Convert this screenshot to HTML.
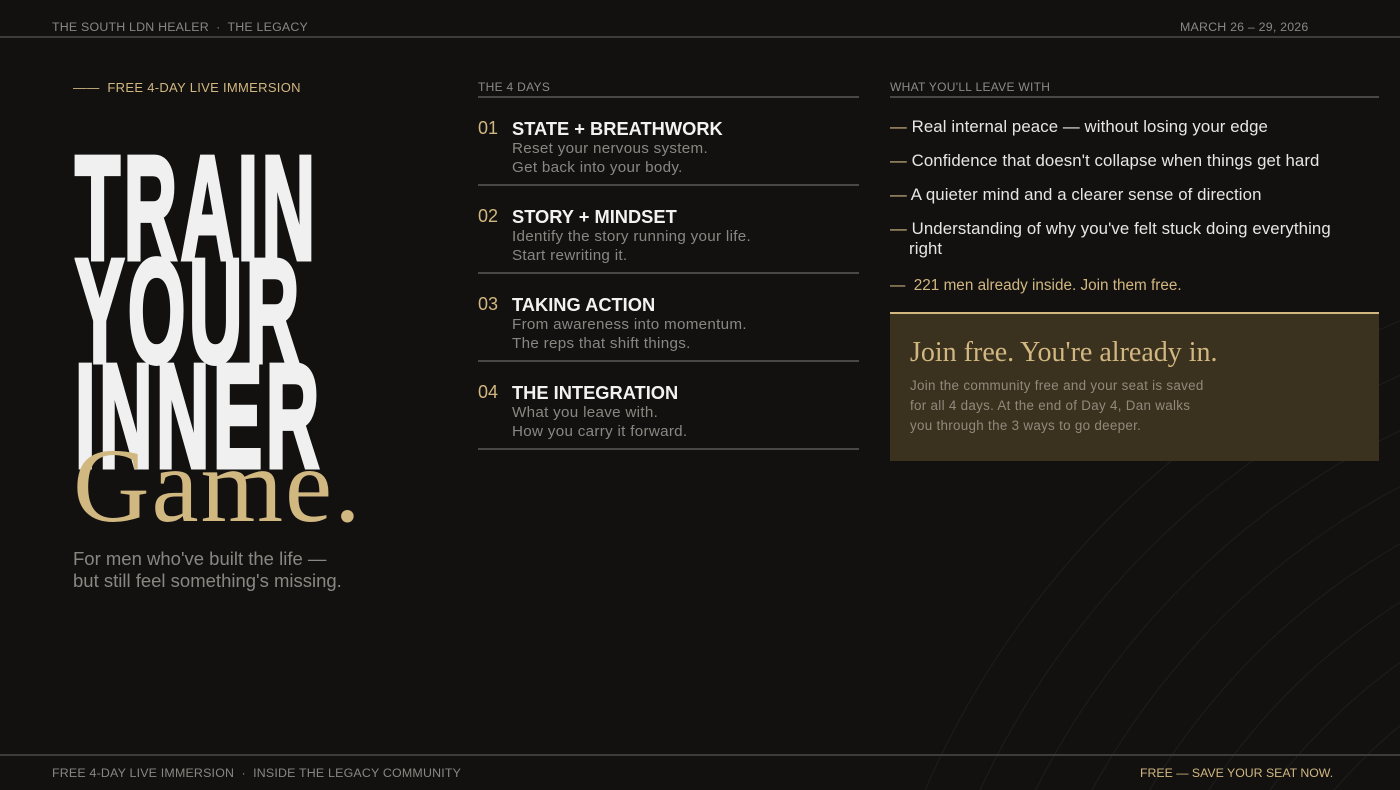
<!DOCTYPE html>
<html><head><meta charset="utf-8"><style>
*{margin:0;padding:0;box-sizing:border-box}
html,body{width:1400px;height:790px;overflow:hidden}
body{background:#121110;font-family:"Liberation Sans",sans-serif;position:relative;color:#eee}
.a{position:absolute;white-space:nowrap}
.top{font-size:12.4px;color:#8a8782;letter-spacing:.2px}
.hl{position:absolute;left:0;width:1400px;height:2px;background:#3e3c39}
.big{position:absolute;left:75px;font-weight:bold;font-size:148px;color:#f0f0f0;transform:scaleX(.5);transform-origin:left top;line-height:1;letter-spacing:7px;-webkit-text-stroke:5px #f0f0f0}
.gold{color:#d1b780}
.lab{font-size:12px;color:#8d8a85;letter-spacing:.3px}
.num{font-size:18px;color:#d1b780}
.dt{font-size:18.3px;font-weight:bold;color:#f2f2f2}
.dd{font-size:15.2px;color:#8a8782;line-height:19px;letter-spacing:.3px}
.ln{position:absolute;height:2px;background:#4a4845}
.li{font-size:16.8px;color:#e6e6e6;letter-spacing:.1px}
</style></head><body>
<svg class="a" style="left:0;top:0" width="1400" height="790"><g fill="none" stroke="#1f1e1c" stroke-width="1">
<circle cx="1750" cy="1150" r="450"/><circle cx="1750" cy="1150" r="500"/><circle cx="1750" cy="1150" r="550"/><circle cx="1750" cy="1150" r="600"/><circle cx="1750" cy="1150" r="650"/><circle cx="1750" cy="1150" r="700"/><circle cx="1750" cy="1150" r="750"/><circle cx="1750" cy="1150" r="800"/><circle cx="1750" cy="1150" r="850"/><circle cx="1750" cy="1150" r="900"/></g></svg>
<div class="a top" style="left:52px;top:20px">THE SOUTH LDN HEALER &nbsp;·&nbsp; THE LEGACY</div>
<div class="a top" style="left:1180px;top:20px">MARCH 26 – 29, 2026</div>
<div class="hl" style="top:36px"></div>
<div class="a gold" style="left:73px;top:80px;font-size:13px;letter-spacing:.3px">—— &nbsp;FREE 4-DAY LIVE IMMERSION</div>
<div class="big" style="top:135px">TRAIN</div>
<div class="big" style="top:238px">YOUR</div>
<div class="big" style="top:343px">INNER</div>
<div class="a gold" style="left:73px;top:433px;font-family:'Liberation Serif',serif;font-size:106px;line-height:1;letter-spacing:2px">Game.</div>
<div class="a" style="left:73px;top:548px;font-size:18.5px;color:#8a8782;line-height:22px">For men who've built the life —<br>but still feel something's missing.</div>

<div class="a lab" style="left:478px;top:80px">THE 4 DAYS</div>
<div class="ln" style="left:478px;top:96px;width:381px"></div>
<div class="a num" style="left:478px;top:118px">01</div><div class="a dt" style="left:512px;top:118px">STATE + BREATHWORK</div><div class="a dd" style="left:512px;top:139px">Reset your nervous system.<br>Get back into your body.</div>
<div class="ln" style="left:478px;top:184px;width:381px"></div>
<div class="a num" style="left:478px;top:206px">02</div><div class="a dt" style="left:512px;top:206px">STORY + MINDSET</div><div class="a dd" style="left:512px;top:227px">Identify the story running your life.<br>Start rewriting it.</div>
<div class="ln" style="left:478px;top:272px;width:381px"></div>
<div class="a num" style="left:478px;top:294px">03</div><div class="a dt" style="left:512px;top:294px">TAKING ACTION</div><div class="a dd" style="left:512px;top:315px">From awareness into momentum.<br>The reps that shift things.</div>
<div class="ln" style="left:478px;top:360px;width:381px"></div>
<div class="a num" style="left:478px;top:382px">04</div><div class="a dt" style="left:512px;top:382px">THE INTEGRATION</div><div class="a dd" style="left:512px;top:403px">What you leave with.<br>How you carry it forward.</div>
<div class="ln" style="left:478px;top:448px;width:381px"></div>

<div class="a lab" style="left:890px;top:80px">WHAT YOU'LL LEAVE WITH</div>
<div class="ln" style="left:890px;top:96px;width:489px"></div>
<div class="a li" style="left:890px;top:117px"><span class="gold">—</span> Real internal peace — without losing your edge</div>
<div class="a li" style="left:890px;top:151px"><span class="gold">—</span> Confidence that doesn't collapse when things get hard</div>
<div class="a li" style="left:890px;top:185px"><span class="gold">—</span> A quieter mind and a clearer sense of direction</div>
<div class="a li" style="left:890px;top:219px;line-height:20px"><span class="gold">—</span> Understanding of why you've felt stuck doing everything<br>&nbsp;&nbsp;&nbsp;&nbsp;right</div>
<div class="a gold" style="left:890px;top:277px;font-size:15.3px"><span>—</span> &nbsp;221 men already inside. Join them free.</div>
<div class="a" style="left:890px;top:312px;width:489px;height:149px;background:#3a311f;border-top:2px solid #d1b780"></div>
<div class="a gold" style="left:910px;top:337px;font-family:'Liberation Serif',serif;font-size:28px">Join free. You're already in.</div>
<div class="a" style="left:910px;top:376px;font-size:13.4px;line-height:20px;color:#918a7c;letter-spacing:.3px">Join the community free and your seat is saved<br>for all 4 days. At the end of Day 4, Dan walks<br>you through the 3 ways to go deeper.</div>

<div class="hl" style="top:754px"></div>
<div class="a top" style="left:52px;top:766px">FREE 4-DAY LIVE IMMERSION &nbsp;·&nbsp; INSIDE THE LEGACY COMMUNITY</div>
<div class="a gold" style="left:1140px;top:766px;font-size:12.3px">FREE — SAVE YOUR SEAT NOW.</div>
</body></html>
